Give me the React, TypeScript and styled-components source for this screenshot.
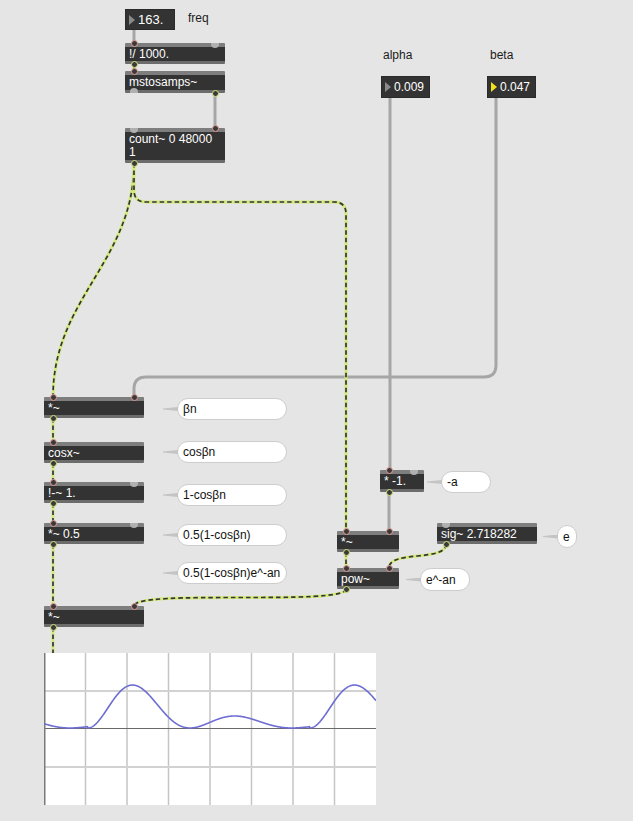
import React from 'react';
import styled, { createGlobalStyle, css } from 'styled-components';

const Global = createGlobalStyle`
  html, body { margin: 0; padding: 0; background: #e5e5e5; }
  body { font-family: "Liberation Sans", Arial, sans-serif; }
`;

const Canvas = styled.div`
  position: relative;
  width: 633px;
  height: 821px;
  background: #e5e5e5;
  overflow: hidden;
  font-family: "Liberation Sans", Arial, sans-serif;
  font-size: 12px;
`;

type Pos = { $x: number; $y: number; $w: number; $h: number };

const placed = css<Pos>`
  position: absolute;
  left: ${(p) => p.$x}px;
  top: ${(p) => p.$y}px;
  width: ${(p) => p.$w}px;
  height: ${(p) => p.$h}px;
  box-sizing: border-box;
`;

const ObjectBox = styled.div<Pos>`
  ${placed};
  background: linear-gradient(
    to bottom,
    #7e7e7e 0 4px,
    #333333 4px calc(100% - 3px),
    #6c6c6c calc(100% - 3px) 100%
  );
  color: #ffffff;
  display: flex;
  align-items: center;
  padding: 4px 4px 3px 4px;
  line-height: 13px;
  white-space: pre;
  border-radius: 1px;
`;

const NumberBox = styled.div<Pos & { $size: number }>`
  ${placed};
  background: #333333;
  border: 1px solid #2a2a2a;
  color: #ffffff;
  font-size: ${(p) => p.$size}px;
  display: flex;
  align-items: center;
  gap: 3px;
  padding-left: 3px;
`;

const Arrow = styled.span<{ $lit?: boolean }>`
  width: 0;
  height: 0;
  border-top: 5px solid transparent;
  border-bottom: 5px solid transparent;
  border-left: 6px solid ${(p) => (p.$lit ? '#f2e21c' : '#8a8a8a')};
`;

type PortProps = { $edge: 'top' | 'bottom'; $side: 'left' | 'right'; $kind: 'in' | 'out' | 'free' };

const Port = styled.span<PortProps>`
  position: absolute;
  box-sizing: border-box;
  ${(p) =>
    p.$kind === 'free'
      ? css`
          width: 8px;
          height: 5px;
          background: #b0b0b0;
          ${p.$side === 'left' ? 'left: 5px;' : 'right: 6px;'}
          ${p.$edge === 'top'
            ? 'top: 0; border-radius: 0 0 4px 4px;'
            : 'bottom: 0; border-radius: 4px 4px 0 0;'}
        `
      : css`
          width: 7px;
          height: 7px;
          border-radius: 50%;
          background: #3a3a3a;
          border: 1.3px solid ${p.$kind === 'in' ? '#e59c98' : '#d6e77a'};
          ${p.$side === 'left' ? 'left: 5.5px;' : 'right: 6.5px;'}
          ${p.$edge === 'top' ? 'top: -3.5px;' : 'bottom: -3.5px;'}
        `}
`;

const Bubble = styled.div<Pos>`
  ${placed};
  background: #ffffff;
  border: 1px solid #cdcdcd;
  border-radius: 11px;
  color: #111111;
  display: flex;
  align-items: center;
  padding-left: 5px;
  white-space: nowrap;
  &::before {
    content: '';
    position: absolute;
    left: -15px;
    top: 50%;
    margin-top: -2px;
    width: 15px;
    height: 4px;
    background: #c4c4c4;
    clip-path: polygon(0 40%, 100% 0, 100% 100%, 0 65%);
  }
`;

const Label = styled.div<{ $x: number; $y: number }>`
  position: absolute;
  left: ${(p) => p.$x}px;
  top: ${(p) => p.$y}px;
  color: #1c1c1c;
  line-height: 14px;
`;

const Cords = styled.svg`
  position: absolute;
  left: 0;
  top: 0;
  width: 633px;
  height: 821px;
  pointer-events: none;
`;

const Scope = styled.div<Pos>`
  ${placed};
  background: #ffffff;
  svg {
    display: block;
  }
`;

type Ports = Array<[PortProps['$edge'], PortProps['$side'], PortProps['$kind']]>;

const objects: Array<{ x: number; y: number; w: number; h: number; text: string; ports: Ports }> = [
  { x: 125, y: 43, w: 100, h: 21, text: '!/ 1000.', ports: [['top', 'left', 'in'], ['top', 'right', 'free'], ['bottom', 'left', 'out']] },
  { x: 125, y: 71, w: 100, h: 22, text: 'mstosamps~', ports: [['top', 'left', 'in'], ['bottom', 'left', 'free'], ['bottom', 'right', 'out']] },
  { x: 125, y: 128, w: 100, h: 35, text: 'count~ 0 48000\n1', ports: [['top', 'left', 'free'], ['top', 'right', 'in'], ['bottom', 'left', 'out']] },
  { x: 44, y: 397, w: 100, h: 21, text: '*~', ports: [['top', 'left', 'in'], ['top', 'right', 'in'], ['bottom', 'left', 'out']] },
  { x: 44, y: 442, w: 100, h: 21, text: 'cosx~', ports: [['top', 'left', 'in'], ['bottom', 'left', 'out']] },
  { x: 44, y: 482, w: 100, h: 21, text: '!-~ 1.', ports: [['top', 'left', 'in'], ['top', 'right', 'free'], ['bottom', 'left', 'out']] },
  { x: 44, y: 523, w: 100, h: 21, text: '*~ 0.5', ports: [['top', 'left', 'in'], ['top', 'right', 'free'], ['bottom', 'left', 'out']] },
  { x: 44, y: 606, w: 100, h: 21, text: '*~', ports: [['top', 'left', 'in'], ['top', 'right', 'in'], ['bottom', 'left', 'out']] },
  { x: 380, y: 470, w: 44, h: 22, text: '* -1.', ports: [['top', 'left', 'in'], ['top', 'right', 'free'], ['bottom', 'left', 'out']] },
  { x: 337, y: 531, w: 62, h: 21, text: '*~', ports: [['top', 'left', 'in'], ['top', 'right', 'in'], ['bottom', 'left', 'out']] },
  { x: 337, y: 568, w: 62, h: 21, text: 'pow~', ports: [['top', 'left', 'in'], ['top', 'right', 'in'], ['bottom', 'left', 'out']] },
  { x: 437, y: 523, w: 100, h: 21, text: 'sig~ 2.718282', ports: [['top', 'left', 'free'], ['bottom', 'left', 'out']] },
];

const numbers = [
  { x: 125, y: 9, w: 50, h: 21, text: '163.', lit: false, size: 13 },
  { x: 381, y: 76, w: 49, h: 22, text: '0.009', lit: false, size: 12 },
  { x: 487, y: 76, w: 49, h: 22, text: '0.047', lit: true, size: 12 },
];

const bubbles = [
  { x: 177, y: 398, w: 110, h: 22, text: 'βn' },
  { x: 177, y: 441, w: 110, h: 22, text: 'cosβn' },
  { x: 177, y: 484, w: 110, h: 22, text: '1-cosβn' },
  { x: 177, y: 524, w: 110, h: 22, text: '0.5(1-cosβn)' },
  { x: 177, y: 562, w: 110, h: 22, text: '0.5(1-cosβn)e^-an' },
  { x: 441, y: 471, w: 50, h: 22, text: '-a' },
  { x: 557, y: 525, w: 20, h: 23, text: 'e' },
  { x: 420, y: 568, w: 50, h: 23, text: 'e^-an' },
];

const labels = [
  { x: 188, y: 11, text: 'freq' },
  { x: 383, y: 48, text: 'alpha' },
  { x: 490, y: 48, text: 'beta' },
];

const controlCords = [
  'M134 30 L134 43',
  'M215 93 L215 128',
  'M390 98 L390 470',
  'M389 492 L389 531',
  'M496 98 L496 365 Q496 377 484 377 L146 377 Q134 377 134 389 L134 397',
];

const signalCords = [
  'M134 64 L134 71',
  'M134 163 C134 262, 53 298, 53 397',
  'M134 163 L134 190 Q134 202 146 202 L334 202 Q346 202 346 214 L346 531',
  'M53 418 L53 442',
  'M53 463 L53 482',
  'M53 503 L53 523',
  'M53 544 L53 606',
  'M53 627 L53 653',
  'M346 552 L346 568',
  'M446 544 C446 562, 389 550, 389 568',
  'M346 589 C346 606, 134 589, 134 606',
];

function SignalCord({ d }: { d: string }) {
  return (
    <g fill="none">
      <path d={d} stroke="#d2ea7e" strokeWidth={3} />
      <path d={d} stroke="#353535" strokeWidth={1.7} strokeDasharray="4.5 3" />
    </g>
  );
}

const SW = 332;
const SH = 152;

function wavePoints(): string {
  const pts: string[] = [];
  for (let x = 0; x <= SW; x += 0.5) {
    const X = x + 44;
    const t = (((X - 88) % 222) + 222) % 222;
    const v = 0.5 * (1 - Math.cos((2 * Math.PI * t) / 102)) * Math.exp(-0.0125 * t);
    pts.push(`${x.toFixed(1)},${(75 - 78 * v).toFixed(2)}`);
  }
  return pts.join(' ');
}

function ScopeView() {
  const verticals = [1, 2, 3, 4, 5, 6, 7].map((i) => (SW / 8) * i);
  return (
    <Scope $x={44} $y={653} $w={SW} $h={SH}>
      <svg width={SW} height={SH} viewBox={`0 0 ${SW} ${SH}`}>
        {verticals.map((vx) => (
          <line key={vx} x1={vx} y1={0} x2={vx} y2={SH} stroke="#c4c4c4" strokeWidth={1.5} />
        ))}
        <line x1={0} y1={38} x2={SW} y2={38} stroke="#d2d2d2" strokeWidth={2} />
        <line x1={0} y1={114} x2={SW} y2={114} stroke="#d2d2d2" strokeWidth={2} />
        <line x1={0} y1={75.5} x2={SW} y2={75.5} stroke="#6a6a6a" strokeWidth={1} />
        <line x1={0.75} y1={0} x2={0.75} y2={SH} stroke="#7a7a7a" strokeWidth={1.5} />
        <polyline points={wavePoints()} fill="none" stroke="#6e6ed2" strokeWidth={1.6} />
      </svg>
    </Scope>
  );
}

export default function App() {
  return (
    <>
      <Global />
      <Canvas>
        <Cords viewBox="0 0 633 821">
          {controlCords.map((d) => (
            <path key={d} d={d} fill="none" stroke="#a6a6a6" strokeWidth={3} />
          ))}
          {signalCords.map((d) => (
            <SignalCord key={d} d={d} />
          ))}
        </Cords>

        {labels.map((l) => (
          <Label key={l.text} $x={l.x} $y={l.y}>
            {l.text}
          </Label>
        ))}

        {numbers.map((n) => (
          <NumberBox key={n.text} $x={n.x} $y={n.y} $w={n.w} $h={n.h} $size={n.size}>
            <Arrow $lit={n.lit} />
            <span>{n.text}</span>
          </NumberBox>
        ))}

        {objects.map((o) => (
          <ObjectBox key={`${o.x}-${o.y}`} $x={o.x} $y={o.y} $w={o.w} $h={o.h}>
            {o.text}
            {o.ports.map(([edge, side, kind]) => (
              <Port key={`${edge}-${side}`} $edge={edge} $side={side} $kind={kind} />
            ))}
          </ObjectBox>
        ))}

        {bubbles.map((b) => (
          <Bubble key={b.text} $x={b.x} $y={b.y} $w={b.w} $h={b.h}>
            {b.text}
          </Bubble>
        ))}

        <ScopeView />
      </Canvas>
    </>
  );
}
